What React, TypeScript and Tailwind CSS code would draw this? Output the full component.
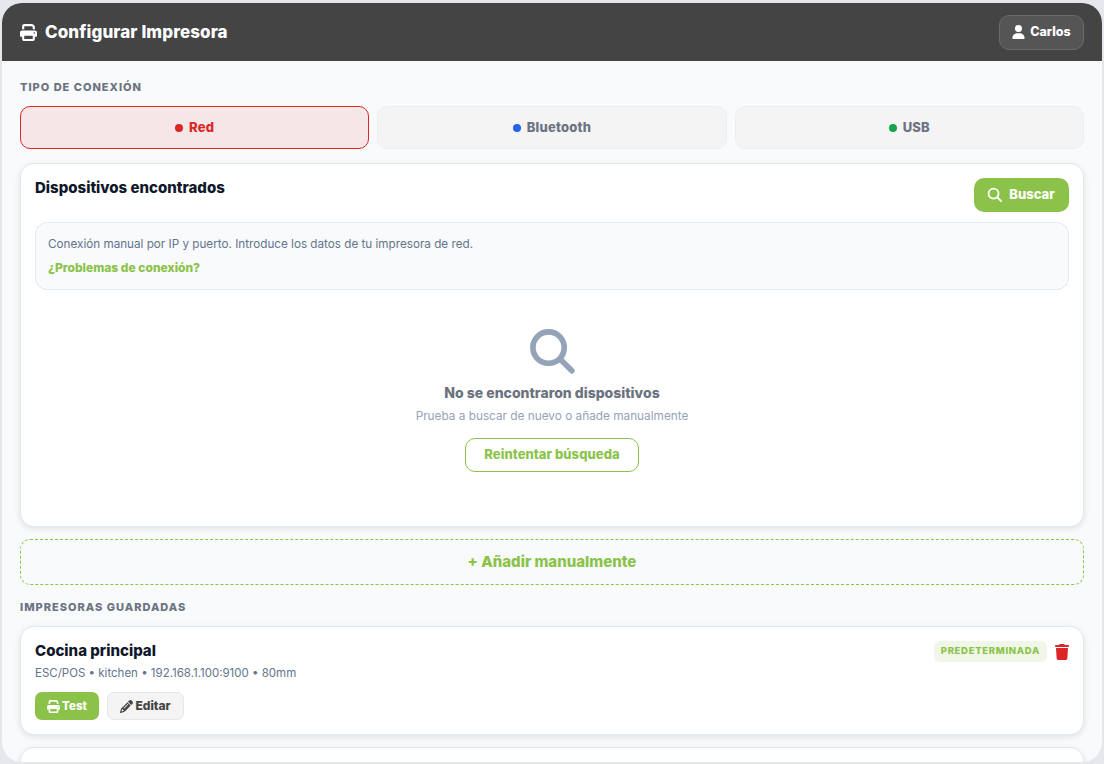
import { FaPrint, FaUser, FaPencil, FaTrash } from 'react-icons/fa6';

function Lens({ className }: { className: string }) {
  return (
    <svg viewBox="0 0 24 24" fill="none" stroke="currentColor" strokeLinecap="round" className={className}>
      <circle cx="10.5" cy="10.5" r="8" strokeWidth="2.9" />
      <path d="M16.6 16.6 22.4 22.4" strokeWidth="2.9" />
    </svg>
  );
}

function ConnTab({ label, dot, active }: { label: string; dot: string; active?: boolean }) {
  return (
    <div
      className={
        'flex-1 h-[43px] rounded-[10px] border flex items-center justify-center gap-[6px] text-[13px] tracking-[0.2px] font-extrabold ' +
        (active
          ? 'bg-[#f5e6e7] border-[#dc2626] text-[#dc2626]'
          : 'bg-[#f4f4f5] border-[#eceef1] text-[#6b7280]')
      }
    >
      <span className={'w-[8px] h-[8px] rounded-full ' + dot} />
      {label}
    </div>
  );
}

function SectionLabel({ children }: { children: string }) {
  return <div className="text-[11px] leading-[14px] font-extrabold tracking-[1px] text-[#6b7280]">{children}</div>;
}

export default function App() {
  return (
    <div className="h-[764px] bg-[#e5e7eb] px-[2px] pt-[3px] pb-[2px] overflow-hidden font-['Inter',sans-serif]">
      <div className="h-[759px] rounded-[20px] bg-[#f8fafc] overflow-hidden">
        <header className="h-[58px] bg-[#444444] flex items-center justify-between pl-[18px] pr-[18px]">
          <div className="flex items-center gap-[8px] text-white">
            <FaPrint className="w-[17px] h-[17px]" />
            <h1 className="text-[17px] leading-[22px] font-extrabold -mt-[1px] tracking-[0.1px]">Configurar Impresora</h1>
          </div>
          <div className="h-[35px] w-[85px] rounded-[10px] bg-[#555555] border border-[#6a6a6a] flex items-center justify-center gap-[5px] text-white text-[12.5px] font-extrabold">
            <FaUser className="w-[13px] h-[14px]" />
            Carlos
          </div>
        </header>

        <main className="px-[18px] pt-[19px]">
          <SectionLabel>TIPO DE CONEXIÓN</SectionLabel>
          <div className="flex gap-[8px] mt-[12px]">
            <ConnTab label="Red" dot="bg-[#dc2626]" active />
            <ConnTab label="Bluetooth" dot="bg-[#2563eb]" />
            <ConnTab label="USB" dot="bg-[#16a34a]" />
          </div>

          <section className="mt-[14px] h-[364px] bg-white border border-[#e2e8f0] rounded-[14px] shadow-[0_2px_6px_rgba(0,0,0,0.1)] px-[14px] pt-[14px]">
            <div className="flex items-start justify-between">
              <h2 className="text-[15px] leading-[20px] font-extrabold text-[#0f172a]">Dispositivos encontrados</h2>
              <button className="h-[34px] w-[95px] rounded-[10px] bg-[#8bc34a] text-white text-[13px] font-extrabold flex items-center justify-center gap-[7px]">
                <Lens className="w-[15px] h-[15px] -mt-[2px] -ml-[1px]" />
                Buscar
              </button>
            </div>
            <div className="mt-[10px] h-[68px] rounded-[12px] border border-[#e2e8f0] bg-[#f8fafc] px-[12px] pt-[13px]">
              <p className="text-[11.7px] leading-[16px] text-[#64748b]">
                Conexión manual por IP y puerto. Introduce los datos de tu impresora de red.
              </p>
              <a className="block mt-[8px] text-[12px] leading-[16px] font-extrabold text-[#8bc34a]">¿Problemas de conexión?</a>
            </div>
            <div className="flex flex-col items-center pt-[37px]">
              <Lens className="w-[47px] h-[47px] text-[#94a3b8] -ml-[2px]" />
              <div className="mt-[10px] text-[14px] leading-[18px] font-extrabold text-[#6b7280]">No se encontraron dispositivos</div>
              <div className="mt-[6px] text-[11.8px] leading-[16px] text-[#94a3b8]">Prueba a buscar de nuevo o añade manualmente</div>
              <button className="mt-[14px] h-[34px] w-[174px] rounded-[10px] border border-[#8bc34a] bg-white text-[13px] tracking-[0.05px] font-extrabold text-[#8bc34a]">
                Reintentar búsqueda
              </button>
            </div>
          </section>

          <button className="mt-[12px] w-full h-[46px] rounded-[10px] border border-dashed border-[#8bc34a] bg-[#f8fafc] text-[15px] font-extrabold text-[#8bc34a]">
            + Añadir manualmente
          </button>

          <div className="mt-[15px]">
            <SectionLabel>IMPRESORAS GUARDADAS</SectionLabel>
          </div>

          <section className="mt-[12px] h-[109px] bg-white border border-[#e2e8f0] rounded-[14px] shadow-[0_2px_6px_rgba(0,0,0,0.1)] px-[14px] pt-[14px]">
            <div className="flex items-start justify-between">
              <div>
                <h3 className="text-[15px] leading-[20px] font-extrabold text-[#0f172a]">Cocina principal</h3>
                <p className="mt-[4px] text-[11.5px] leading-[16px] text-[#64748b]">ESC/POS • kitchen • 192.168.1.100:9100 • 80mm</p>
              </div>
              <div className="flex items-center gap-[8px]">
                <span className="h-[21px] px-[7px] rounded-[6px] bg-[#f0f7e8] text-[#8bc34a] text-[9.5px] font-extrabold tracking-[0.7px] flex items-center">PREDETERMINADA</span>
                <FaTrash className="w-[14px] h-[16px] text-[#dc2626]" />
              </div>
            </div>
            <div className="flex gap-[8px] mt-[11px]">
              <button className="h-[28px] w-[64px] rounded-[7px] bg-[#8bc34a] text-white text-[11.5px] font-extrabold flex items-center justify-center gap-[2px]">
                <FaPrint className="w-[13px] h-[13px]" />
                <span className="pt-[1px]">Test</span>
              </button>
              <button className="h-[28px] w-[77px] rounded-[7px] bg-[#f4f4f5] border border-[#e5e7eb] text-[#444444] text-[12px] font-extrabold flex items-center justify-center gap-[2px]">
                <FaPencil className="w-[13px] h-[13px]" />
                Editar
              </button>
            </div>
          </section>

          <section className="mt-[12px] h-[109px] bg-white border border-[#e2e8f0] rounded-[14px] shadow-[0_2px_6px_rgba(0,0,0,0.1)] px-[14px] pt-[14px]">
            <div className="flex justify-end">
              <FaTrash className="w-[14px] h-[16px] text-[#dc2626]" />
            </div>
          </section>
        </main>
      </div>
    </div>
  );
}
